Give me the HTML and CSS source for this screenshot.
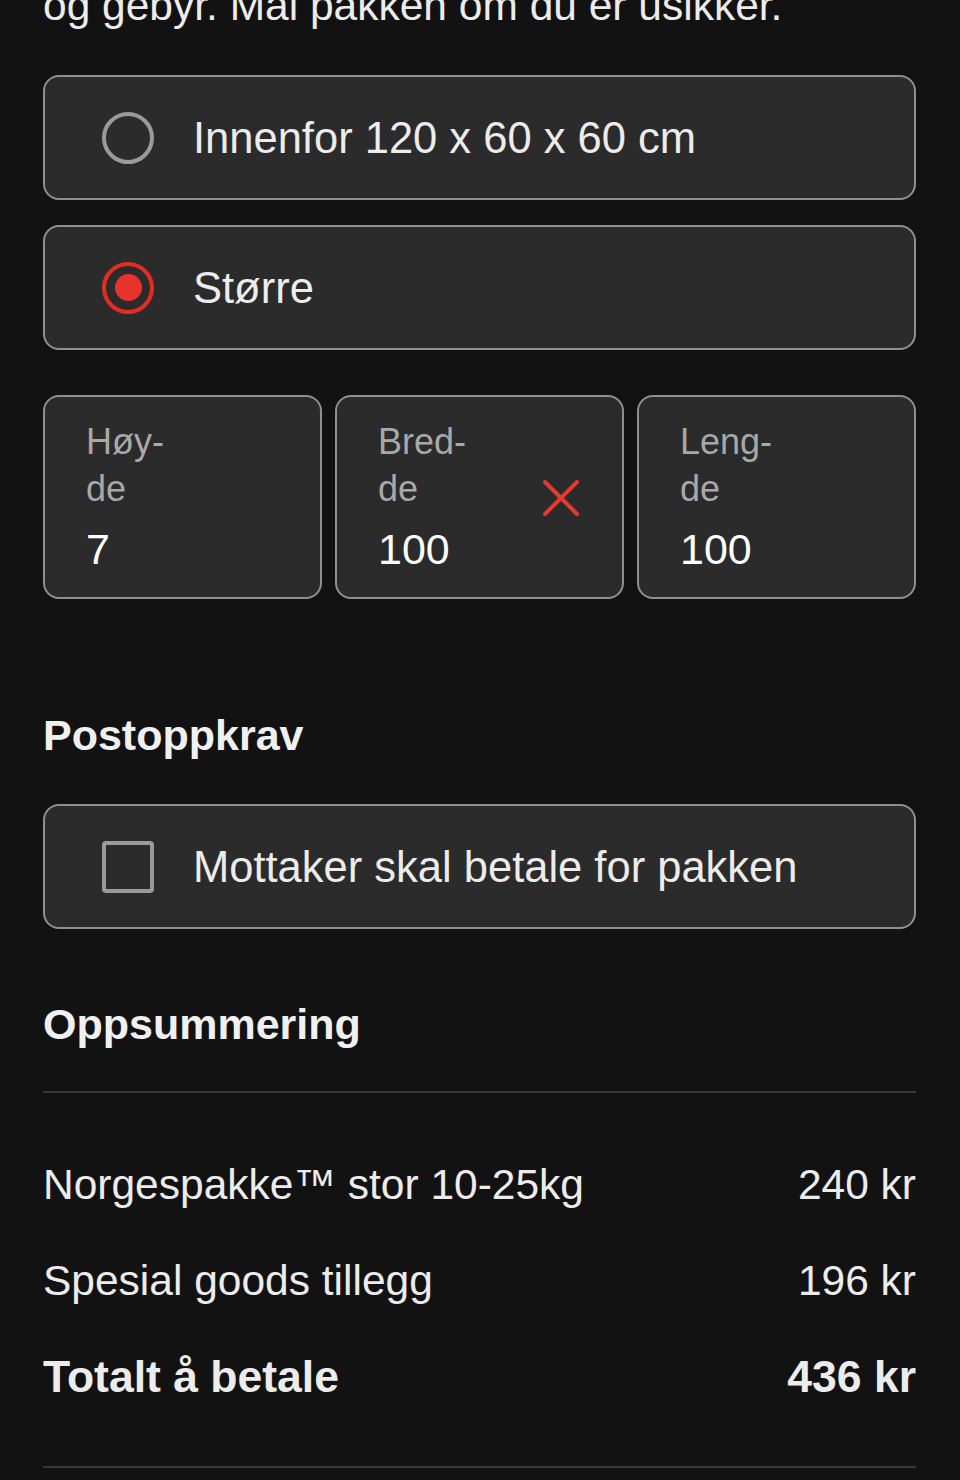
FILE: index.html
```html
<!DOCTYPE html>
<html lang="no">
<head>
    <meta charset="UTF-8">
    <meta name="viewport" content="width=device-width, initial-scale=1.0">
    <title>Send pakke</title>
    <link rel="stylesheet" href="styles.css">
</head>
<body>
    <div class="page">
        <p class="intro">og gebyr. Mål pakken om du er usikker.</p>

        <div class="options">
            <label class="option">
                <span class="radio"></span>
                <span class="option-text">Innenfor 120 x 60 x 60 cm</span>
            </label>
            <label class="option">
                <span class="radio checked"></span>
                <span class="option-text">Større</span>
            </label>
        </div>

        <div class="dimensions">
            <div class="dim-box">
                <div class="dim-label">Høy-<br>de</div>
                <div class="dim-value">7</div>
            </div>
            <div class="dim-box">
                <div class="dim-label">Bred-<br>de</div>
                <div class="dim-value">100</div>
                <svg class="clear-icon" width="36" height="36" viewBox="0 0 36 36">
                    <path d="M2 2 L34 34 M34 2 L2 34" stroke="#e53a30" stroke-width="4" stroke-linecap="round" fill="none"/>
                </svg>
            </div>
            <div class="dim-box">
                <div class="dim-label">Leng-<br>de</div>
                <div class="dim-value">100</div>
            </div>
        </div>

        <h2 class="section-title title-cod">Postoppkrav</h2>
        <label class="option">
            <span class="checkbox"></span>
            <span class="option-text">Mottaker skal betale for pakken</span>
        </label>

        <h2 class="section-title title-summary">Oppsummering</h2>
        <div class="summary">
            <div class="summary-row">
                <span>Norgespakke™ stor 10-25kg</span>
                <span>240 kr</span>
            </div>
            <div class="summary-row">
                <span>Spesial goods tillegg</span>
                <span>196 kr</span>
            </div>
            <div class="summary-row total">
                <span>Totalt å betale</span>
                <span>436 kr</span>
            </div>
        </div>
    </div>
</body>
</html>
```

FILE: styles.css
```css
body {
    margin: 0;
    background-color: #121212;
    color: #ececec;
    font-family: "Liberation Sans", Arial, sans-serif;
}
.page {
    padding: 0 44px 0 43px;
    overflow: hidden;
    height: 1480px;
    box-sizing: border-box;
}
.intro {
    margin: -19px 0 44px;
    font-size: 42.5px;
    line-height: 50px;
}
.options {
    display: flex;
    flex-direction: column;
    gap: 25px;
}
.option {
    display: flex;
    align-items: center;
    gap: 39px;
    height: 125px;
    box-sizing: border-box;
    padding-left: 57px;
    background-color: #2b2b2b;
    border: 2px solid #8f8f8f;
    border-radius: 16px;
}
.option-text {
    font-size: 43.5px;
    line-height: 50px;
}
.radio {
    width: 52px;
    height: 52px;
    box-sizing: border-box;
    border: 4.5px solid #9a9a9a;
    border-radius: 50%;
    display: flex;
    align-items: center;
    justify-content: center;
    flex-shrink: 0;
}
.radio.checked { border-color: #e32d22; }
.radio.checked::after {
    content: "";
    width: 27px;
    height: 27px;
    border-radius: 50%;
    background-color: #e8332a;
}
.checkbox {
    width: 52px;
    height: 52px;
    box-sizing: border-box;
    border: 4.5px solid #9a9a9a;
    border-radius: 4px;
    flex-shrink: 0;
}
.dimensions {
    display: grid;
    grid-template-columns: 279px 289px 279px;
    gap: 13px;
    margin-top: 45px;
}
.dim-box {
    position: relative;
    height: 204px;
    box-sizing: border-box;
    padding: 21px 20px 0 41px;
    background-color: #2b2b2b;
    border: 2px solid #8f8f8f;
    border-radius: 16px;
}
.dim-label {
    font-size: 36px;
    line-height: 47px;
    color: #a8a8a8;
}
.dim-value {
    margin-top: 12px;
    font-size: 43px;
    line-height: 50px;
    color: #ffffff;
}
.clear-icon {
    position: absolute;
    left: 206px;
    top: 83px;
}
.section-title {
    margin: 0;
    font-size: 43px;
    line-height: 50px;
    font-weight: bold;
    color: #f0f0f0;
}
.title-cod { margin: 111px 0 44px; }
.title-summary { margin: 70px 0 42px; }
.summary {
    border-top: 2px solid #383838;
    border-bottom: 2px solid #383838;
    padding: 44px 0 41px;
}
.summary-row {
    display: flex;
    justify-content: space-between;
    font-size: 42.5px;
    line-height: 96px;
}
.summary-row.total {
    font-weight: bold;
    font-size: 44.5px;
}
```
